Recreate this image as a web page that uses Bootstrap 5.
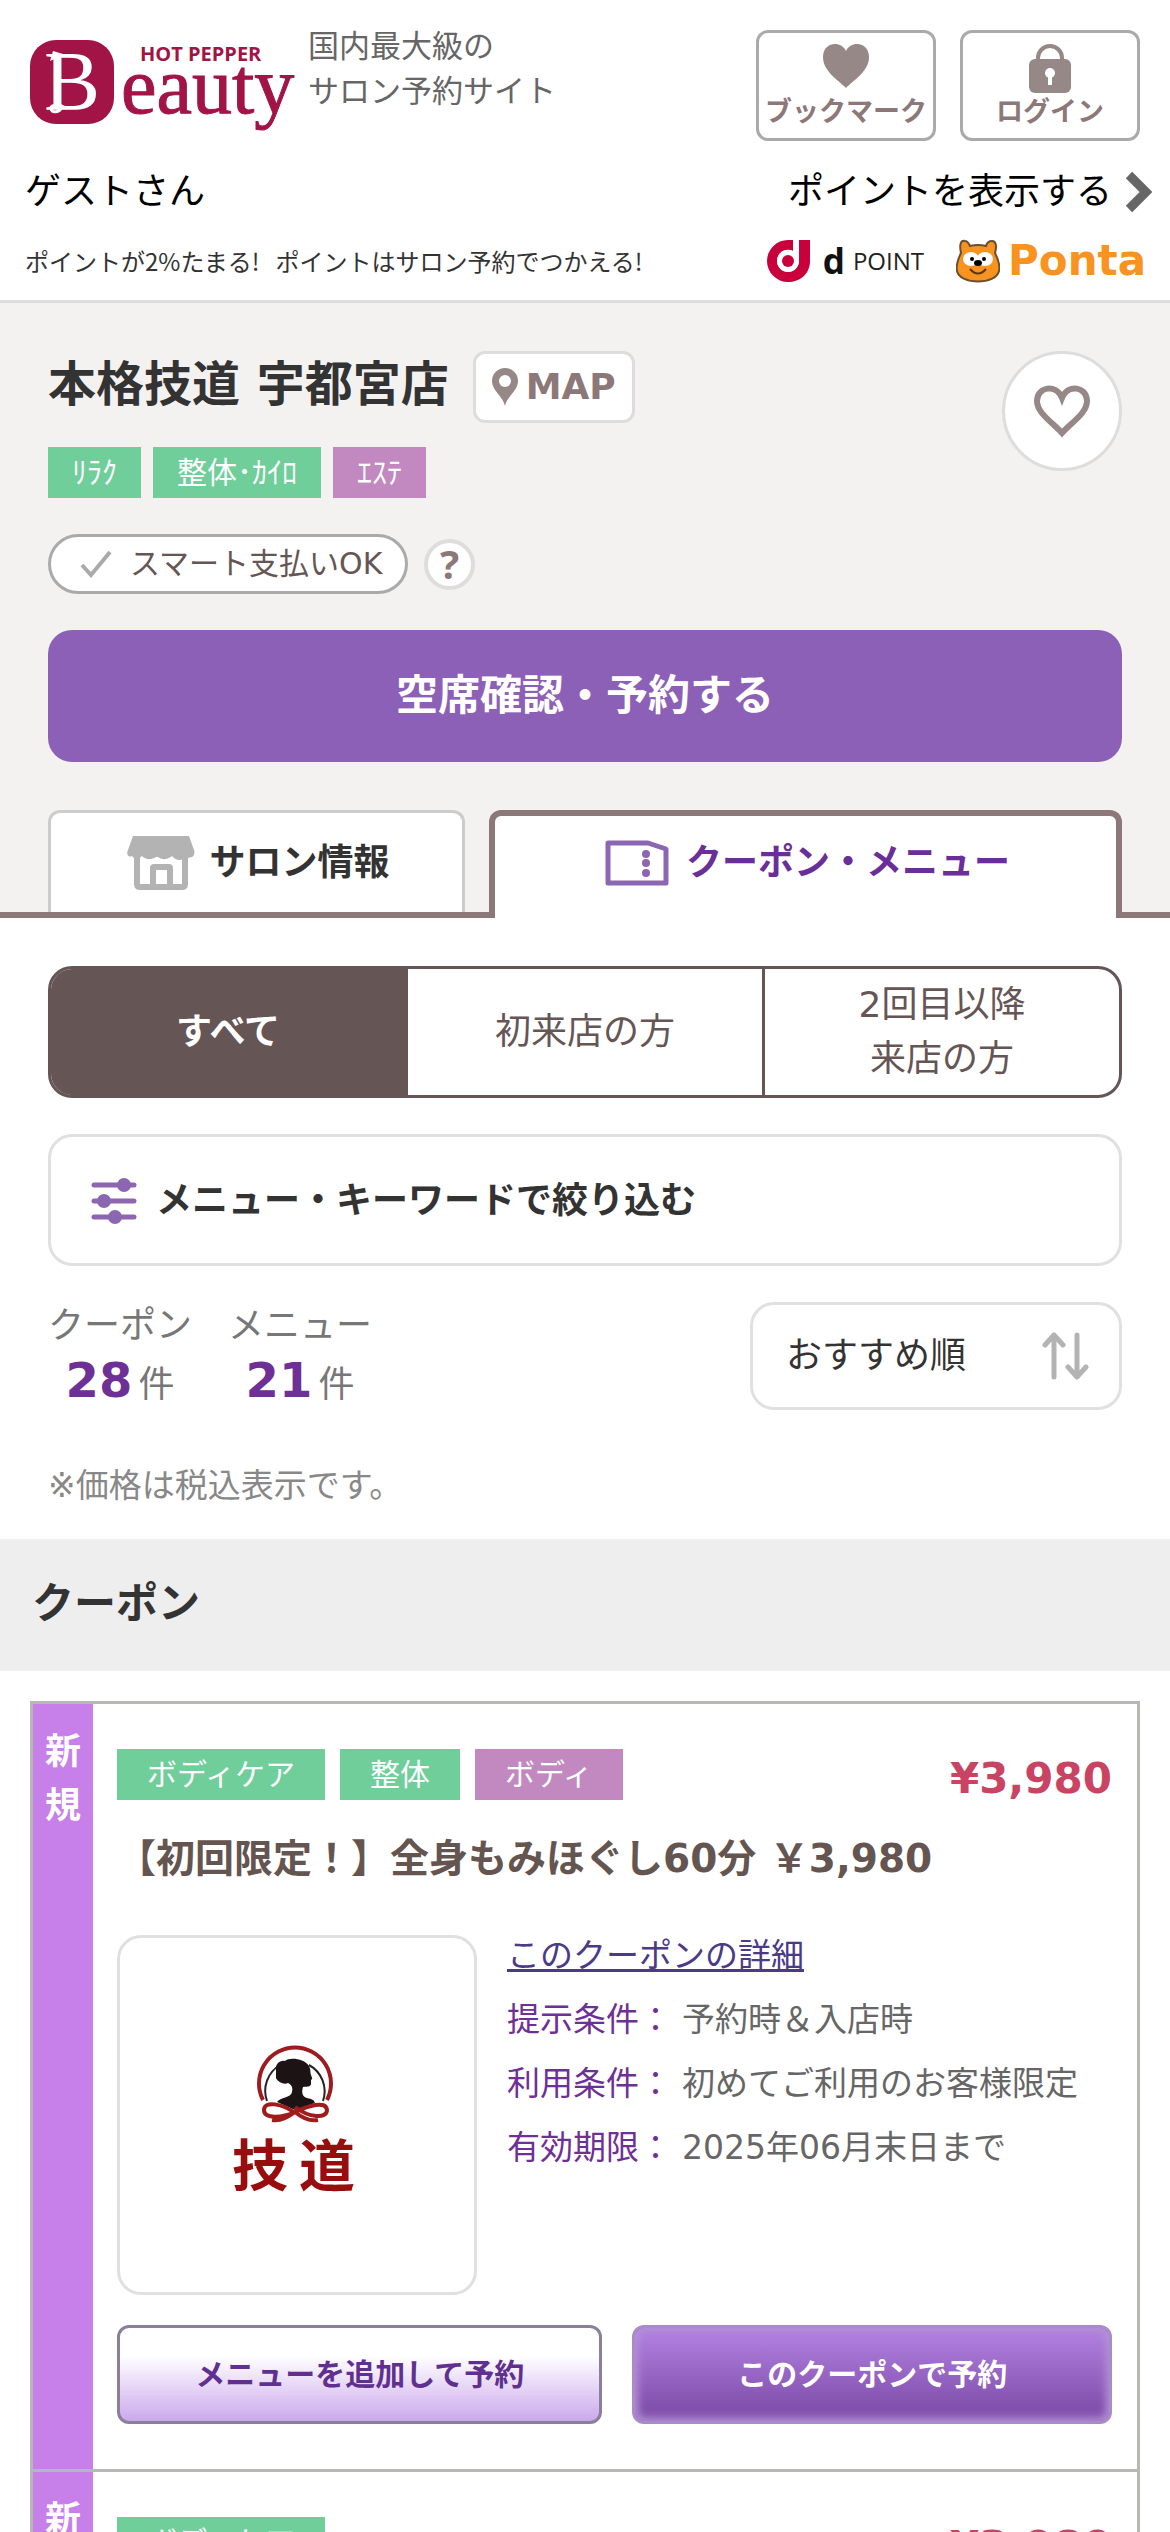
<!DOCTYPE html>
<html lang="ja">
<head>
<meta charset="utf-8">
<meta name="viewport" content="width=device-width, initial-scale=1">
<title>本格技道 宇都宮店 | クーポン・メニュー</title>
<link href="https://cdn.jsdelivr.net/npm/bootstrap@5.3.0/dist/css/bootstrap.min.css" rel="stylesheet">
<style>
body{font-family:"DejaVu Sans","Noto Sans CJK JP",sans-serif;font-size:36px;line-height:54px;color:#333}
a{color:inherit;text-decoration:none}
svg{display:block;flex:none}
.site-head{border-bottom:3px solid #ddd;padding:30px 30px 15px 30px}
.tagline{font-size:31px;line-height:45px;color:#666;margin-top:-6px}
.head-btn{width:180px;height:111px;border:3px solid #aaa;border-radius:12px;color:#8c7878;font-size:27px;line-height:36px;font-weight:bold;padding:10px 0 0;background:#fff}
.guest-row{color:#000;margin:24px -14px 0 -5px}
.guest-row a{gap:12px}
.point-row{margin:18px -6px 0 -5px;font-family:"Noto Sans CJK JP",sans-serif;font-size:24px;line-height:48px;color:#333}
.d-label{font:bold 35px/48px "Open Sans",sans-serif;color:#111}
.d-point{font:24px/48px "Open Sans",sans-serif;color:#222}
.ponta{font:bold 42px/48px "DejaVu Sans",sans-serif;color:#f7931e}
.bear{margin-left:32px}
.shop{background:#f3f2f0;padding:48px 48px 0}
.shop-name{font-size:48px;line-height:66px;font-weight:bold;margin:0}
.map-btn{width:162px;height:72px;border:3px solid #ddd;border-radius:12px;background:#fff;color:#8c7878;font-weight:bold;padding:0}
.fav-btn{width:120px;height:120px;border:3px solid #ddd;background:#fff;padding:0}
.genre{background:#6fce9a;color:#fff;font-size:30px;line-height:51px;height:51px;padding:0 24px}
.genre-pink{background:#c288c0}
.shop-genres{margin-top:-24px}
.smart-row{margin-top:36px}
.smart{width:360px;height:60px;border:3px solid #aaa;border-radius:30px;background:#fff;color:#655;font-size:30px;line-height:54px;padding-left:27px}
.help-btn{width:51px;height:51px;border:4px solid #ddd;background:#fff;color:#8c7878;font:bold 40px/42px "Noto Sans",sans-serif;padding:0}
.reserve{height:132px;border:0;border-radius:24px;background:#8d60b7;color:#fff;font-size:42px;font-weight:bold;margin-top:36px}
.shop-tabs{margin:48px -48px 0;padding:0 48px;border-bottom:6px solid #8c7878;gap:24px;flex-wrap:nowrap}
.shop-tabs .nav-item{flex:417 1 0}
.shop-tabs .nav-item:last-child{flex-grow:633}
.shop-tabs .nav-link{height:102px;display:flex;align-items:center;justify-content:center;gap:14px;border:3px solid #ccc;border-bottom:0;border-radius:12px 12px 0 0;background:#fff;color:#333;font-weight:bold;padding:0 0 0 4px;margin:0}
.shop-tabs .nav-link.active{border:6px solid #8c7878;border-bottom:0;height:108px;margin-bottom:-6px;color:#6a2e98;background:#fff;padding-bottom:8px;gap:17px}
.main-pad{padding:48px 48px 0}
.segment{border:3px solid #655;border-radius:24px;overflow:hidden;height:132px;color:#655}
.segment label{flex:1 1 0;display:flex;align-items:center;justify-content:center;text-align:center;cursor:pointer}
.segment label+input+label{border-left:3px solid #655}
.segment .btn-check:checked+label{background:#655;color:#fff;font-weight:bold}
.narrow-btn{height:132px;border:3px solid #e0e0e0;border-radius:24px;background:#fff;color:#333;font-weight:bold;padding:2px 39px 0;gap:18px;margin-top:36px}
.result-row{margin-top:36px}
.counts{gap:36px;margin-top:-3px}
.count-cell{width:144px;text-align:center;color:#777;white-space:nowrap}
.count-cell strong{font-size:48px;color:#6e3096;margin-right:6px}
.sort-box{width:372px;height:108px}
.sort-box select{width:100%;height:100%;border:3px solid #e0e0e0;border-radius:24px;appearance:none;background:#fff;color:#333;padding:0 33px}
.sort-box svg{position:absolute;right:33px;top:30px;pointer-events:none}
.tax{font-size:33px;color:#888;margin:47px 0 26px}
.sec-title{background:#eee;font-size:42px;font-weight:bold;line-height:63px;padding:33px 32px 36px;margin:0}
.coupons{margin:30px 30px 0;border:3px solid #b9b7b3}
.coupon{border-bottom:3px solid #b9b7b3}
.coupon:last-child{border-bottom:0}
.new-strip{width:60px;flex:none;background:#c77fe9;color:#fff;font-weight:bold;text-align:center;padding:21px 12px 0}
.coupon-body{padding:45px 25px 45px 24px;min-width:0}
.coupon .genre{padding:0 30px}
.coupon-genres{gap:15px}
.price{font-size:42px;font-weight:bold;color:#c94463;padding-top:3px}
.coupon-name{font-size:39px;line-height:60px;font-weight:bold;color:#655550;margin:23px 0 46px}
.coupon-cols,.acts{gap:30px}
.photo{width:360px;height:360px;flex:none;border:3px solid #e0e0e0;border-radius:24px;overflow:hidden;background:#fff}
.terms{font-size:33px;line-height:48px;color:#666;display:flex;flex-direction:column;gap:16px;margin-top:-3px}
.terms a{color:#4b3a86;text-decoration:underline}
.terms dl{margin:0;display:grid;grid-template-columns:165px 1fr;gap:16px 10px}
.terms dt{font-weight:normal;color:#6e3096;white-space:nowrap}
.terms dd{margin:0}
.acts{margin-top:30px}
.act{height:99px;border-radius:12px;font-size:30px;font-weight:bold;padding:0}
.act-add{flex:486 1 0;border:3px solid #8c7f9c;color:#5f3090;background:linear-gradient(#fff 30%,#cba9ec)}
.act-go{flex:480 1 0;border:3px solid #a98bc8;color:#fff;background:linear-gradient(#ae7ddd 10%,#8250ad 85%);box-shadow:inset 0 0 9px 3px #b592d6}
</style>
</head>
<body class="bg-white">
<header class="site-head">
  <div class="d-flex align-items-start">
    <a href="#" aria-label="HOT PEPPER Beauty">
      <svg width="270" height="102" viewBox="30 30 270 102">
        <rect x="30" y="40" width="84" height="84" rx="26" fill="#a11445"/>
        <text x="44" y="110" font-family="Liberation Serif" font-size="84" fill="#fff">B</text>
        <path d="M66 108c-7-4-16-4-15 1 1 4 8 4 11-2" fill="none" stroke="#fff" stroke-width="3"/>
        <path d="M50 61l3-10 10 3-6 4z" fill="#fff"/>
        <text x="140" y="61" font-family="Open Sans" font-weight="700" font-size="20" fill="#a11445">HOT PEPPER</text>
        <text x="121" y="113" font-family="Liberation Serif" font-size="80" fill="#a11445" stroke="#a11445" stroke-width="1">eauty</text>
      </svg>
    </a>
    <p class="tagline mb-0 ps-2">国内最大級の<br>サロン予約サイト</p>
    <div class="d-flex ms-auto gap-4">
      <button type="button" class="head-btn d-flex flex-column align-items-center justify-content-between">
        <svg width="46" height="46" viewBox="0 0 46 46" fill="#968887"><path d="M23 45C14 36 0 28 0 14 0-1 18-3 23 8 28-3 46-1 46 14 46 28 32 36 23 45z"/></svg>
        <span class="pb-2">ブックマーク</span></button>
      <button type="button" class="head-btn d-flex flex-column align-items-center justify-content-between">
        <svg width="42" height="50" viewBox="0 0 42 50"><path d="M9 20v-5a12 12 0 0 1 24 0v5" fill="none" stroke="#968887" stroke-width="4"/><rect y="16" width="42" height="34" rx="6" fill="#968887"/><circle cx="21" cy="30" r="5" fill="#fff"/><path d="M19 30h4v12h-4z" fill="#fff"/></svg>
        <span class="pb-2">ログイン</span></button>
    </div>
  </div>
  <div class="guest-row d-flex justify-content-between">
    <span>ゲストさん</span>
    <a href="#" class="d-flex align-items-center">ポイントを表示する
      <svg width="30" height="42" viewBox="0 0 30 42"><path d="M5 4l17 17L5 38" fill="none" stroke="#666" stroke-width="9"/></svg></a>
  </div>
  <div class="point-row d-flex align-items-center">
    <span class="me-3">ポイントが2%たまる!</span><span>ポイントはサロン予約でつかえる!</span>
    <svg class="ms-auto" width="44" height="42" viewBox="0 0 44 42"><path d="M26 0H21A21 21 0 0 0 21 42C33 42 43 34 43 21V0H32V21A11 11 0 1 1 26 11z" fill="#c8003c"/><circle cx="21" cy="21" r="11" fill="#fff"/><path d="M26 0h6v22h-6z" fill="#fff"/><circle cx="21" cy="21" r="6" fill="#c8003c"/></svg>
    <span class="d-label ms-2 ps-1">d</span><span class="d-point ms-2">POINT</span>
    <svg class="bear" width="44" height="44" viewBox="0 0 44 44"><path d="M5 14C3 5 5 1 9 2c3 0 4 3 5 5q8-2 16 0c1-4 3-5 6-5 4 0 5 5 3 12 4 8 5 14 4 18-3 14-39 14-42 0-1-5 1-12 4-18z" fill="#f7931e" stroke="#6a5030" stroke-width="2"/><ellipse cx="15" cy="20" rx="8" ry="7" fill="#fff"/><ellipse cx="29" cy="20" rx="8" ry="7" fill="#fff"/><circle cx="16" cy="20" r="2"/><circle cx="28" cy="20" r="2"/><ellipse cx="22" cy="24" rx="4" ry="3"/><path d="M14 30q8 9 16 0" fill="none" stroke="#5b3518" stroke-width="2"/></svg>
    <span class="ponta ms-2">Ponta</span>
  </div>
</header>

<section class="shop">
  <div class="d-flex align-items-start">
    <h1 class="shop-name">本格技道 宇都宮店</h1>
    <button type="button" class="map-btn ms-4 d-flex align-items-center justify-content-center gap-2">
      <svg width="26" height="38" viewBox="0 0 26 38"><path d="M13 38C11 28 0 23 0 13a13 13 0 0 1 26 0C26 23 15 28 13 38z" fill="#968887"/><circle cx="13" cy="13" r="6" fill="#fff"/></svg>MAP</button>
    <button type="button" class="fav-btn rounded-circle ms-auto d-flex align-items-center justify-content-center" aria-label="お気に入り">
      <svg width="60" height="54" viewBox="0 0 60 54"><path d="M30 49C20 38 5 29 5 17 5 3 24-1 30 14 36-1 55 3 55 17 55 29 40 38 30 49z" fill="none" stroke="#968887" stroke-width="6"/></svg></button>
  </div>
  <div class="shop-genres d-flex">
    <span class="genre me-2">ﾘﾗｸ</span><span class="genre mx-1">整体･ｶｲﾛ</span><span class="genre genre-pink ms-2">ｴｽﾃ</span>
  </div>
  <div class="smart-row d-flex align-items-center gap-3">
    <div class="smart d-flex align-items-center gap-3"><svg width="36" height="32" viewBox="0 0 36 32"><path d="M4 17l9 10L32 4" fill="none" stroke="#aaa" stroke-width="4"/></svg>スマート支払いOK</div>
    <button type="button" class="help-btn rounded-circle">?</button>
  </div>
  <button type="button" class="reserve w-100">空席確認・予約する</button>
  <ul class="nav nav-tabs shop-tabs">
    <li class="nav-item"><a class="nav-link" href="#">
      <svg width="68" height="54" viewBox="0 0 68 54"><path d="M6 0h56l5 14c2 7-4 9-8 7-4 4-10 4-14-1-5 4-10 4-14 1h-2c-5 3-10 3-14-1-4 4-8 3-10 0C1 22-1 18 1 14z" fill="#b3b3b3"/><path d="M10 19v29q0 3 3 3h42q3 0 3-3V19M26 51V32q0-1 1-1h15q1 0 1 1v19" fill="none" stroke="#b3b3b3" stroke-width="6"/></svg>サロン情報</a></li>
    <li class="nav-item"><a class="nav-link active" aria-current="page" href="#">
      <svg width="64" height="46" viewBox="0 0 64 46"><path d="M3 3h40l18 6v34H3z" fill="none" stroke="#8d66b2" stroke-width="5" stroke-linejoin="round"/><g fill="#8d66b2"><circle cx="41" cy="14" r="4"/><circle cx="41" cy="23" r="4"/><circle cx="41" cy="33" r="4"/></g></svg>クーポン・メニュー</a></li>
  </ul>
</section>

<main>
  <div class="main-pad">
    <div class="segment d-flex" role="group" aria-label="来店回数">
      <input type="radio" class="btn-check" name="visit" id="v1" checked><label for="v1">すべて</label>
      <input type="radio" class="btn-check" name="visit" id="v2"><label for="v2">初来店の方</label>
      <input type="radio" class="btn-check" name="visit" id="v3"><label for="v3">2回目以降<br>来店の方</label>
    </div>
    <button type="button" class="narrow-btn w-100 d-flex align-items-center">
      <svg width="48" height="48" viewBox="0 0 48 48" fill="#8d66b2" stroke="#8d66b2" stroke-width="5" stroke-linecap="round"><path d="M4 8h40M4 24h40M4 40h40"/><g stroke="none"><circle cx="34" cy="8" r="7"/><circle cx="14" cy="24" r="7"/><circle cx="25" cy="40" r="7"/></g></svg>メニュー・キーワードで絞り込む</button>
    <div class="result-row d-flex justify-content-between align-items-start">
      <div class="counts d-flex">
        <div class="count-cell">クーポン<br><strong>28</strong>件</div>
        <div class="count-cell">メニュー<br><strong>21</strong>件</div>
      </div>
      <div class="sort-box position-relative">
        <select aria-label="並び順"><option>おすすめ順</option></select>
        <svg width="48" height="48" viewBox="0 0 48 48" fill="none" stroke="#b3b3b3" stroke-width="5" stroke-linecap="round" stroke-linejoin="round"><path d="M13 45V4M4 13l9-10 9 10M36 3v41M27 35l9 10 9-10"/></svg>
      </div>
    </div>
    <p class="tax">※価格は税込表示です。</p>
  </div>
  <h2 class="sec-title">クーポン</h2>
  <div class="coupons">
    <article class="coupon d-flex">
      <div class="new-strip">新規</div>
      <div class="coupon-body flex-grow-1">
        <div class="d-flex justify-content-between align-items-start">
          <div class="coupon-genres d-flex"><span class="genre">ボディケア</span><span class="genre">整体</span><span class="genre genre-pink">ボディ</span></div>
          <span class="price">¥3,980</span>
        </div>
        <h3 class="coupon-name">【初回限定！】全身もみほぐし60分 ￥3,980</h3>
        <div class="coupon-cols d-flex">
          <div class="photo">
            <svg class="w-100 h-100" viewBox="120 1938 354 354" role="img" aria-label="技道">
              <path d="M263 2100A36 36 0 1 1 327 2100" fill="none" stroke="#9c1c20" stroke-width="4"/>
              <path d="M267 2101A30 30 0 0 1 280 2065M309 2065A30 30 0 0 1 323 2101" fill="none" stroke="#222" stroke-width="2"/>
              <path d="M276 2070c-1-6 4-10 9-9 4-4 19-3 24 5 2 4 1 6 2 9 1 3 2 4 0 5v4c-1 4-5 2-8 3-2 6 0 10 4 11 5 1 7 2 8 5l-20 7-18-8c3-5 14-4 15-10 1-4 0-7-4-9-4 2-10-1-12-5z" fill="#1c1414"/>
              <path d="M295 2113c-12-9-31-13-31-3 0 9 18 8 31 2s31-12 32-2c0 9-18 8-32-3M272 2120q10 2 23-8 12 10 23 8" fill="none" stroke="#a01c1c" stroke-width="4"/>
              <text x="232" y="2186" font-family="Noto Sans CJK JP" font-size="56" font-weight="700" fill="#980d0d">技</text>
              <text x="299" y="2186" font-family="Noto Sans CJK JP" font-size="56" font-weight="700" fill="#980d0d">道</text>
            </svg>
          </div>
          <div class="terms">
            <a href="#">このクーポンの詳細</a>
            <dl><dt>提示条件：</dt><dd>予約時＆入店時</dd><dt>利用条件：</dt><dd>初めてご利用のお客様限定</dd><dt>有効期限：</dt><dd>2025年06月末日まで</dd></dl>
          </div>
        </div>
        <div class="acts d-flex">
          <button type="button" class="act act-add">メニューを追加して予約</button>
          <button type="button" class="act act-go">このクーポンで予約</button>
        </div>
      </div>
    </article>
    <article class="coupon d-flex">
      <div class="new-strip">新規</div>
      <div class="coupon-body flex-grow-1">
        <div class="d-flex justify-content-between align-items-start">
          <div class="coupon-genres d-flex"><span class="genre">ボディケア</span></div>
          <span class="price">¥3,980</span>
        </div>
      </div>
    </article>
  </div>
</main>
<script src="https://cdn.jsdelivr.net/npm/bootstrap@5.3.0/dist/js/bootstrap.bundle.min.js"></script>
</body>
</html>
